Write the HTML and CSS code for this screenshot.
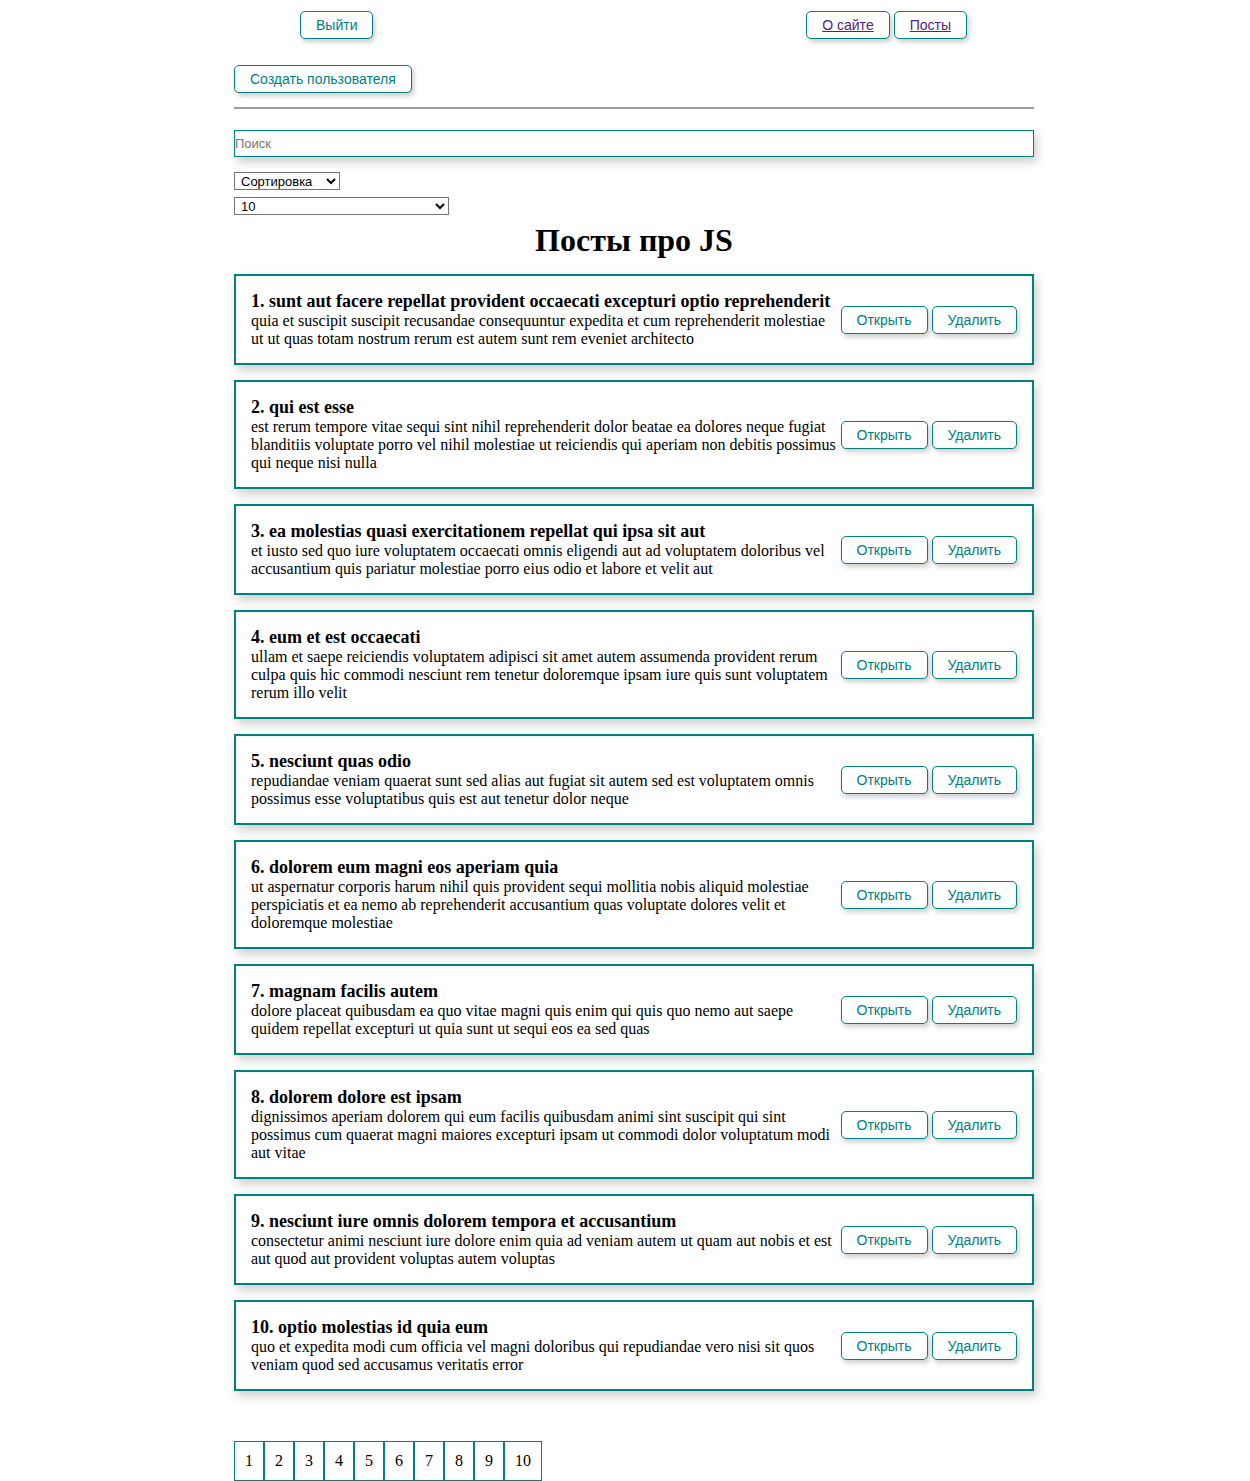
FILE: index.html
```html
<!DOCTYPE html>
<html lang="ru">
<head>
<meta charset="utf-8">
<title>Посты про JS</title>
<link rel="stylesheet" href="styles.css">
</head>
<body>
<nav class="navbar">
  <button class="btn">Выйти</button>
  <div class="navbar__links">
    <button class="btn"><a href="#about" class="link">О сайте</a></button>
    <button class="btn"><a href="#posts" class="link">Посты</a></button>
  </div>
</nav>
<main class="app">
  <button class="btn">Создать пользователя</button>
  <hr class="divider">
  <input class="search" type="text" placeholder="Поиск">
  <select class="select select--sort">
    <option>Сортировка</option>
  </select>
  <select class="select select--limit">
    <option>10</option>
  </select>
  <h1 class="title">Посты про JS</h1>

  <div class="post">
    <div class="post__content">
      <strong class="post__title">1. sunt aut facere repellat provident occaecati excepturi optio reprehenderit</strong>
      <div>quia et suscipit suscipit recusandae consequuntur expedita et cum reprehenderit molestiae ut ut quas totam nostrum rerum est autem sunt rem eveniet architecto</div>
    </div>
    <div class="post__btns"><button class="btn">Открыть</button> <button class="btn">Удалить</button></div>
  </div>

  <div class="post">
    <div class="post__content">
      <strong class="post__title">2. qui est esse</strong>
      <div>est rerum tempore vitae sequi sint nihil reprehenderit dolor beatae ea dolores neque fugiat blanditiis voluptate porro vel nihil molestiae ut reiciendis qui aperiam non debitis possimus qui neque nisi nulla</div>
    </div>
    <div class="post__btns"><button class="btn">Открыть</button> <button class="btn">Удалить</button></div>
  </div>

  <div class="post">
    <div class="post__content">
      <strong class="post__title">3. ea molestias quasi exercitationem repellat qui ipsa sit aut</strong>
      <div>et iusto sed quo iure voluptatem occaecati omnis eligendi aut ad voluptatem doloribus vel accusantium quis pariatur molestiae porro eius odio et labore et velit aut</div>
    </div>
    <div class="post__btns"><button class="btn">Открыть</button> <button class="btn">Удалить</button></div>
  </div>

  <div class="post">
    <div class="post__content">
      <strong class="post__title">4. eum et est occaecati</strong>
      <div>ullam et saepe reiciendis voluptatem adipisci sit amet autem assumenda provident rerum culpa quis hic commodi nesciunt rem tenetur doloremque ipsam iure quis sunt voluptatem rerum illo velit</div>
    </div>
    <div class="post__btns"><button class="btn">Открыть</button> <button class="btn">Удалить</button></div>
  </div>

  <div class="post">
    <div class="post__content">
      <strong class="post__title">5. nesciunt quas odio</strong>
      <div>repudiandae veniam quaerat sunt sed alias aut fugiat sit autem sed est voluptatem omnis possimus esse voluptatibus quis est aut tenetur dolor neque</div>
    </div>
    <div class="post__btns"><button class="btn">Открыть</button> <button class="btn">Удалить</button></div>
  </div>

  <div class="post">
    <div class="post__content">
      <strong class="post__title">6. dolorem eum magni eos aperiam quia</strong>
      <div>ut aspernatur corporis harum nihil quis provident sequi mollitia nobis aliquid molestiae perspiciatis et ea nemo ab reprehenderit accusantium quas voluptate dolores velit et doloremque molestiae</div>
    </div>
    <div class="post__btns"><button class="btn">Открыть</button> <button class="btn">Удалить</button></div>
  </div>

  <div class="post">
    <div class="post__content">
      <strong class="post__title">7. magnam facilis autem</strong>
      <div>dolore placeat quibusdam ea quo vitae magni quis enim qui quis quo nemo aut saepe quidem repellat excepturi ut quia sunt ut sequi eos ea sed quas</div>
    </div>
    <div class="post__btns"><button class="btn">Открыть</button> <button class="btn">Удалить</button></div>
  </div>

  <div class="post">
    <div class="post__content">
      <strong class="post__title">8. dolorem dolore est ipsam</strong>
      <div>dignissimos aperiam dolorem qui eum facilis quibusdam animi sint suscipit qui sint possimus cum quaerat magni maiores excepturi ipsam ut commodi dolor voluptatum modi aut vitae</div>
    </div>
    <div class="post__btns"><button class="btn">Открыть</button> <button class="btn">Удалить</button></div>
  </div>

  <div class="post">
    <div class="post__content">
      <strong class="post__title">9. nesciunt iure omnis dolorem tempora et accusantium</strong>
      <div>consectetur animi nesciunt iure dolore enim quia ad veniam autem ut quam aut nobis et est aut quod aut provident voluptas autem voluptas</div>
    </div>
    <div class="post__btns"><button class="btn">Открыть</button> <button class="btn">Удалить</button></div>
  </div>

  <div class="post">
    <div class="post__content">
      <strong class="post__title">10. optio molestias id quia eum</strong>
      <div>quo et expedita modi cum officia vel magni doloribus qui repudiandae vero nisi sit quos veniam quod sed accusamus veritatis error</div>
    </div>
    <div class="post__btns"><button class="btn">Открыть</button> <button class="btn">Удалить</button></div>
  </div>

  <div class="pages">
    <span class="page">1</span><span class="page">2</span><span class="page">3</span><span class="page">4</span><span class="page">5</span><span class="page">6</span><span class="page">7</span><span class="page">8</span><span class="page">9</span><span class="page">10</span>
  </div>
</main>
</body>
</html>
```

FILE: styles.css
```css
* {
  box-sizing: border-box;
}

body {
  margin: 0;
  font-family: "Liberation Serif", "Times New Roman", serif;
  font-size: 16px;
  line-height: 18px;
  color: #000;
  background: #fff;
}

.btn {
  padding: 5px 15px;
  border: 1px solid #008080;
  border-radius: 5px;
  background: #fff;
  color: #008080;
  font-family: "Liberation Sans", Arial, sans-serif;
  font-size: 14px;
  line-height: 16px;
  box-shadow: 2px 3px 5px rgba(0, 0, 0, 0.2);
  cursor: pointer;
}

.navbar {
  display: flex;
  justify-content: space-between;
  align-items: center;
  padding: 11px 283px 0 300px;
  height: 39px;
}

.navbar__links {
  display: flex;
  gap: 4px;
}

.link {
  color: #551a8b;
  text-decoration: underline;
}

.app {
  width: 800px;
  margin-left: 234px;
  padding-top: 26px;
}

.divider {
  margin: 14px 0 21px;
  border: none;
  border-top: 2px solid #9e9e9e;
  height: 0;
}

.search {
  display: block;
  width: 100%;
  height: 27px;
  padding: 0;
  border: 1px solid #008080;
  font-family: "Liberation Sans", Arial, sans-serif;
  font-size: 13px;
  box-shadow: 3px 5px 10px rgba(0, 0, 0, 0.2);
  outline: none;
}

.search::placeholder {
  color: #777;
}

.select {
  display: block;
  height: 18px;
  padding: 0 0 0 2px;
  border: 1px solid #767676;
  border-radius: 0;
  background: #fff;
  font-family: "Liberation Sans", Arial, sans-serif;
  font-size: 13px;
  color: #000;
}

.select--sort {
  width: 106px;
  margin-top: 15px;
}

.select--limit {
  width: 215px;
  margin-top: 7px;
}

.title {
  margin: 7px 0 15px;
  text-align: center;
  font-size: 32px;
  line-height: 37px;
  font-weight: bold;
}

.post {
  display: flex;
  align-items: center;
  margin-bottom: 15px;
  padding: 15px;
  border: 2px solid #008080;
  box-shadow: 3px 5px 10px rgba(0, 0, 0, 0.2);
}

.post__content {
  flex: 1;
  min-width: 0;
}

.post__title {
  display: block;
  font-size: 18px;
  line-height: 21px;
}

.post__btns {
  flex-shrink: 0;
  white-space: nowrap;
}

.pages {
  display: flex;
  margin-top: 50px;
}

.page {
  padding: 10px;
  border: 1px solid #008080;
  line-height: 18px;
}
```
